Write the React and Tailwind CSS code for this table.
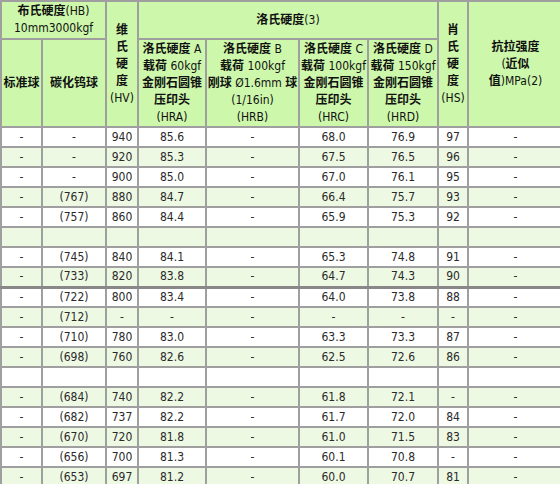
const rows = [
  ['-', '-', '940', '85.6', '-', '68.0', '76.9', '97', '-'],
  ['-', '-', '920', '85.3', '-', '67.5', '76.5', '96', '-'],
  ['-', '-', '900', '85.0', '-', '67.0', '76.1', '95', '-'],
  ['-', '(767)', '880', '84.7', '-', '66.4', '75.7', '93', '-'],
  ['-', '(757)', '860', '84.4', '-', '65.9', '75.3', '92', '-'],
  null,
  ['-', '(745)', '840', '84.1', '-', '65.3', '74.8', '91', '-'],
  ['-', '(733)', '820', '83.8', '-', '64.7', '74.3', '90', '-'],
  ['-', '(722)', '800', '83.4', '-', '64.0', '73.8', '88', '-'],
  ['-', '(712)', '-', '-', '-', '-', '-', '-', '-'],
  ['-', '(710)', '780', '83.0', '-', '63.3', '73.3', '87', '-'],
  ['-', '(698)', '760', '82.6', '-', '62.5', '72.6', '86', '-'],
  null,
  ['-', '(684)', '740', '82.2', '-', '61.8', '72.1', '-', '-'],
  ['-', '(682)', '737', '82.2', '-', '61.7', '72.0', '84', '-'],
  ['-', '(670)', '720', '81.8', '-', '61.0', '71.5', '83', '-'],
  ['-', '(656)', '700', '81.3', '-', '60.1', '70.8', '-', '-'],
  ['-', '(653)', '697', '81.2', '-', '60.0', '70.7', '81', '-'],
];

const widths = [41, 64, 32, 68, 93, 69, 70, 30, 95];

// chinese runs are bold, latin stays regular
function rich(s) {
  return s.split(/([\u4e00-\u9fff]+)/).map((p, i) =>
    /[\u4e00-\u9fff]/.test(p) ? (
      <b key={i} className="font-bold text-[12px]">{p}</b>
    ) : (
      <span key={i}>{p}</span>
    )
  );
}

function Lines({ items }) {
  return items.map((t, i) => (
    <div key={i} className="whitespace-nowrap">{rich(t)}</div>
  ));
}

const th = 'border-2 border-[#9f9f9f] bg-[#cdf7ab] text-center align-middle p-0 text-[#111] font-normal';
const td = 'border-2 border-[#9f9f9f] text-center align-middle p-0 text-[#2a2a2a]';

export default function App() {
  return (
    <div className="w-[560px] h-[484px] overflow-hidden bg-white">
      <table
        className="table-fixed border-collapse w-[562px] text-[12px] leading-[17px]"
        style={{ fontFamily: '"DejaVu Sans Condensed", "DejaVu Sans", "Noto Sans CJK SC", sans-serif' }}
      >
        <colgroup>
          {widths.map((w, i) => (
            <col key={i} style={{ width: w }} />
          ))}
        </colgroup>
        <thead>
          <tr className="h-[38px]">
            <th colSpan={2} className={th}>
              <Lines items={['布氏硬度(HB)', '10mm3000kgf']} />
            </th>
            <th rowSpan={2} className={th}>
              <Lines items={['维', '氏', '硬', '度', '(HV)']} />
            </th>
            <th colSpan={4} className={th}>
              <Lines items={['洛氏硬度(3)']} />
            </th>
            <th rowSpan={2} className={th}>
              <Lines items={['肖', '氏', '硬', '度', '(HS)']} />
            </th>
            <th rowSpan={2} className={th}>
              <Lines items={['抗拉强度', '(近似', '值)MPa(2)']} />
            </th>
          </tr>
          <tr className="h-[88px]">
            <th className={th}>
              <Lines items={['标准球']} />
            </th>
            <th className={th}>
              <Lines items={['碳化钨球']} />
            </th>
            <th className={th}>
              <Lines items={['洛氏硬度 A', '载荷 60kgf', '金刚石圆锥', '压印头', '(HRA)']} />
            </th>
            <th className={th}>
              <Lines items={['洛氏硬度 B', '载荷 100kgf', '刚球 Ø1.6mm 球', '(1/16in)', '(HRB)']} />
            </th>
            <th className={th}>
              <Lines items={['洛氏硬度 C', '载荷 100kgf', '金刚石圆锥', '压印头', '(HRC)']} />
            </th>
            <th className={th}>
              <Lines items={['洛氏硬度 D', '载荷 150kgf', '金刚石圆锥', '压印头', '(HRD)']} />
            </th>
          </tr>
        </thead>
        <tbody>
          {rows.map((r, i) => (
            <tr key={i} className={`h-[20px] ${i % 2 ? 'bg-[#eef9e4]' : 'bg-white'}`}>
              {(r || Array(9).fill('')).map((c, j) => (
                <td key={j} className={`${td} ${i === 8 ? 'border-t-[3px] border-t-[#888]' : ''}`}>
                  {c}
                </td>
              ))}
            </tr>
          ))}
        </tbody>
      </table>
    </div>
  );
}
